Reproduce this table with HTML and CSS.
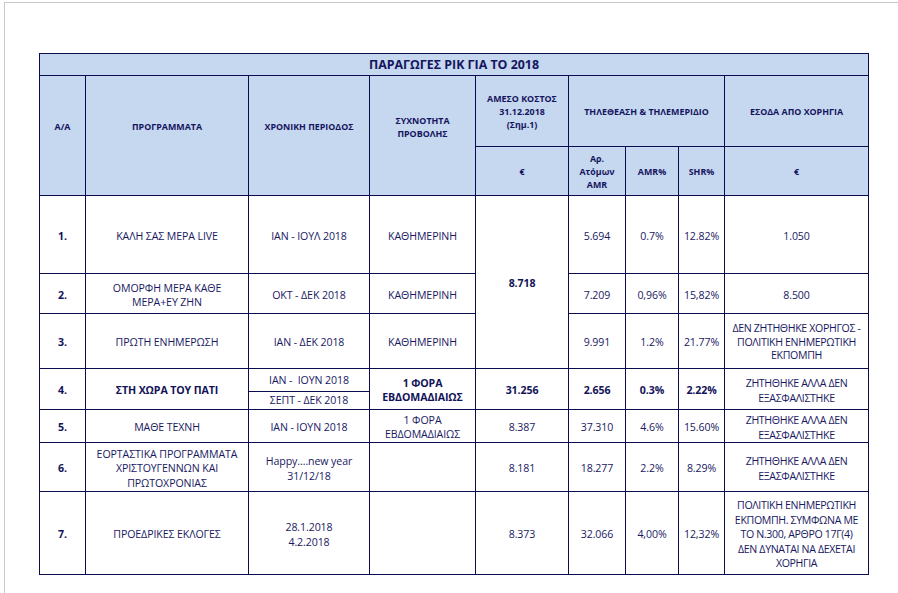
FILE: index.html
```html
<!DOCTYPE html>
<html lang="el">
<head>
<meta charset="utf-8">
<title>ΠΑΡΑΓΩΓΕΣ ΡΙΚ ΓΙΑ ΤΟ 2018</title>
<link rel="stylesheet" href="styles.css">
</head>
<body>
<div class="page">
  <table class="prod">
    <colgroup>
      <col class="c-aa"><col class="c-prog"><col class="c-period"><col class="c-freq"><col class="c-cost"><col class="c-amr"><col class="c-amrp"><col class="c-shr"><col class="c-spon">
    </colgroup>
    <thead>
      <tr class="r-title"><th colspan="9" class="title">ΠΑΡΑΓΩΓΕΣ ΡΙΚ ΓΙΑ ΤΟ 2018</th></tr>
      <tr class="r-h1">
        <th rowspan="2" class="lifted">Α/Α</th>
        <th rowspan="2" class="lifted">ΠΡΟΓΡΑΜΜΑΤΑ</th>
        <th rowspan="2" class="lifted">ΧΡΟΝΙΚΗ ΠΕΡΙΟΔΟΣ</th>
        <th rowspan="2" class="lifted">ΣΥΧΝΟΤΗΤΑ<br>ΠΡΟΒΟΛΗΣ</th>
        <th>ΑΜΕΣΟ ΚΟΣΤΟΣ<br>31.12.2018<br>(Σημ.1)</th>
        <th colspan="3">ΤΗΛΕΘΕΑΣΗ &amp; ΤΗΛΕΜΕΡΙΔΙΟ</th>
        <th>ΕΣΟΔΑ ΑΠΟ ΧΟΡΗΓΙΑ</th>
      </tr>
      <tr class="r-h2">
        <th>€</th>
        <th>Αρ.<br>Ατόμων<br>AMR</th>
        <th>AMR%</th>
        <th>SHR%</th>
        <th>€</th>
      </tr>
    </thead>
    <tbody>
      <tr class="r1">
        <td class="b">1.</td>
        <td>ΚΑΛΗ ΣΑΣ ΜΕΡΑ LIVE</td>
        <td>ΙΑΝ - ΙΟΥΛ 2018</td>
        <td>ΚΑΘΗΜΕΡΙΝΗ</td>
        <td rowspan="3" class="b">8.718</td>
        <td>5.694</td>
        <td>0.7%</td>
        <td>12.82%</td>
        <td>1.050</td>
      </tr>
      <tr class="r2">
        <td class="b">2.</td>
        <td>ΟΜΟΡΦΗ ΜΕΡΑ ΚΑΘΕ<br>ΜΕΡΑ+ΕΥ ΖΗΝ</td>
        <td>ΟΚΤ - ΔΕΚ 2018</td>
        <td>ΚΑΘΗΜΕΡΙΝΗ</td>
        <td>7.209</td>
        <td>0,96%</td>
        <td>15,82%</td>
        <td>8.500</td>
      </tr>
      <tr class="r3">
        <td class="b">3.</td>
        <td>ΠΡΩΤΗ ΕΝΗΜΕΡΩΣΗ</td>
        <td>ΙΑΝ - ΔΕΚ 2018</td>
        <td>ΚΑΘΗΜΕΡΙΝΗ</td>
        <td>9.991</td>
        <td>1.2%</td>
        <td>21.77%</td>
        <td class="tight spon">ΔΕΝ ΖΗΤΗΘΗΚΕ ΧΟΡΗΓΟΣ -<br>ΠΟΛΙΤΙΚΗ ΕΝΗΜΕΡΩΤΙΚΗ<br>ΕΚΠΟΜΠΗ</td>
      </tr>
      <tr class="r4a">
        <td rowspan="2" class="b">4.</td>
        <td rowspan="2" class="b">ΣΤΗ ΧΩΡΑ ΤΟΥ ΠΑΤΙ</td>
        <td class="sub">ΙΑΝ -&nbsp; ΙΟΥΝ 2018</td>
        <td rowspan="2" class="b tight">1 ΦΟΡΑ<br>ΕΒΔΟΜΑΔΙΑΙΩΣ</td>
        <td rowspan="2" class="b">31.256</td>
        <td rowspan="2" class="b">2.656</td>
        <td rowspan="2" class="b">0.3%</td>
        <td rowspan="2" class="b">2.22%</td>
        <td rowspan="2" class="spon">ΖΗΤΗΘΗΚΕ ΑΛΛΑ ΔΕΝ<br>ΕΞΑΣΦΑΛΙΣΤΗΚΕ</td>
      </tr>
      <tr class="r4b">
        <td class="sub">ΣΕΠΤ - ΔΕΚ 2018</td>
      </tr>
      <tr class="r5">
        <td class="b">5.</td>
        <td>ΜΑΘΕ ΤΕΧΝΗ</td>
        <td>ΙΑΝ - ΙΟΥΝ 2018</td>
        <td class="tight">1 ΦΟΡΑ<br>ΕΒΔΟΜΑΔΙΑΙΩΣ</td>
        <td>8.387</td>
        <td>37.310</td>
        <td>4.6%</td>
        <td>15.60%</td>
        <td class="spon">ΖΗΤΗΘΗΚΕ ΑΛΛΑ ΔΕΝ<br>ΕΞΑΣΦΑΛΙΣΤΗΚΕ</td>
      </tr>
      <tr class="r6">
        <td class="b">6.</td>
        <td>ΕΟΡΤΑΣΤΙΚΑ ΠΡΟΓΡΑΜΜΑΤΑ<br>ΧΡΙΣΤΟΥΓΕΝΝΩΝ ΚΑΙ<br>ΠΡΩΤΟΧΡΟΝΙΑΣ</td>
        <td>Happy….new year<br>31/12/18</td>
        <td></td>
        <td>8.181</td>
        <td>18.277</td>
        <td>2.2%</td>
        <td>8.29%</td>
        <td class="spon">ΖΗΤΗΘΗΚΕ ΑΛΛΑ ΔΕΝ<br>ΕΞΑΣΦΑΛΙΣΤΗΚΕ</td>
      </tr>
      <tr class="r7">
        <td class="b">7.</td>
        <td>ΠΡΟΕΔΡΙΚΕΣ ΕΚΛΟΓΕΣ</td>
        <td>28.1.2018<br>4.2.2018</td>
        <td></td>
        <td>8.373</td>
        <td>32.066</td>
        <td>4,00%</td>
        <td>12,32%</td>
        <td class="spon">ΠΟΛΙΤΙΚΗ ΕΝΗΜΕΡΩΤΙΚΗ<br>ΕΚΠΟΜΠΗ. ΣΥΜΦΩΝΑ ΜΕ<br>ΤΟ Ν.300, ΑΡΘΡΟ 17Γ(4)<br>ΔΕΝ ΔΥΝΑΤΑΙ ΝΑ ΔΕΧΕΤΑΙ<br>ΧΟΡΗΓΙΑ</td>
      </tr>
    </tbody>
  </table>
</div>
</body>
</html>
```

FILE: styles.css
```css
html, body {
  margin: 0;
  padding: 0;
  background: #ffffff;
}

.page {
  margin: 2px 0 0 4px;
  height: 591px;
  box-sizing: border-box;
  border-top: 1px solid #c9c9c9;
  border-left: 1px solid #c9c9c9;
  padding: 50px 0 0 34px;
  font-family: "Open Sans", "Noto Sans", "DejaVu Sans", sans-serif;
  color: #181862;
}

.prod {
  border-collapse: collapse;
  table-layout: fixed;
  width: 829px;
}

.prod th,
.prod td {
  border: 1px solid #0b0b4f;
  padding: 0 1px;
  text-align: center;
  vertical-align: middle;
  font-size: 10.6px;
  line-height: 14.5px;
  overflow: visible;
  white-space: nowrap;
  letter-spacing: -0.1px;
}

.prod td {
  padding-top: 3px;
}

.prod th {
  background: #c6d7f0;
  font-weight: 700;
  font-size: 8.9px;
  line-height: 13px;
  color: #15155e;
  letter-spacing: 0;
}

.c-aa { width: 46px; }
.c-prog { width: 163px; }
.c-period { width: 121px; }
.c-freq { width: 106px; }
.c-cost { width: 93px; }
.c-amr { width: 57px; }
.c-amrp { width: 53px; }
.c-shr { width: 46px; }
.c-spon { width: 144px; }

.prod th.title {
  font-size: 12.4px;
  line-height: 14px;
  padding: 0;
}

.prod th.lifted {
  padding-bottom: 18px;
}

.r-title { height: 22px; }
.r-h1 { height: 71px; }
.r-h2 { height: 49px; }
.r1 { height: 78px; }
.r2 { height: 40px; }
.r3 { height: 55px; }
.r4a { height: 23px; }
.r4b { height: 18px; }
.r5 { height: 33px; }
.r6 { height: 49px; }
.r7 { height: 83px; }

.prod td.b {
  font-weight: 700;
  color: #121258;
}

.prod td.tight {
  line-height: 13.5px;
}

.prod td.spon {
  letter-spacing: -0.35px;
}

.prod td.sub {
  line-height: 13px;
  padding-top: 0;
}
```
